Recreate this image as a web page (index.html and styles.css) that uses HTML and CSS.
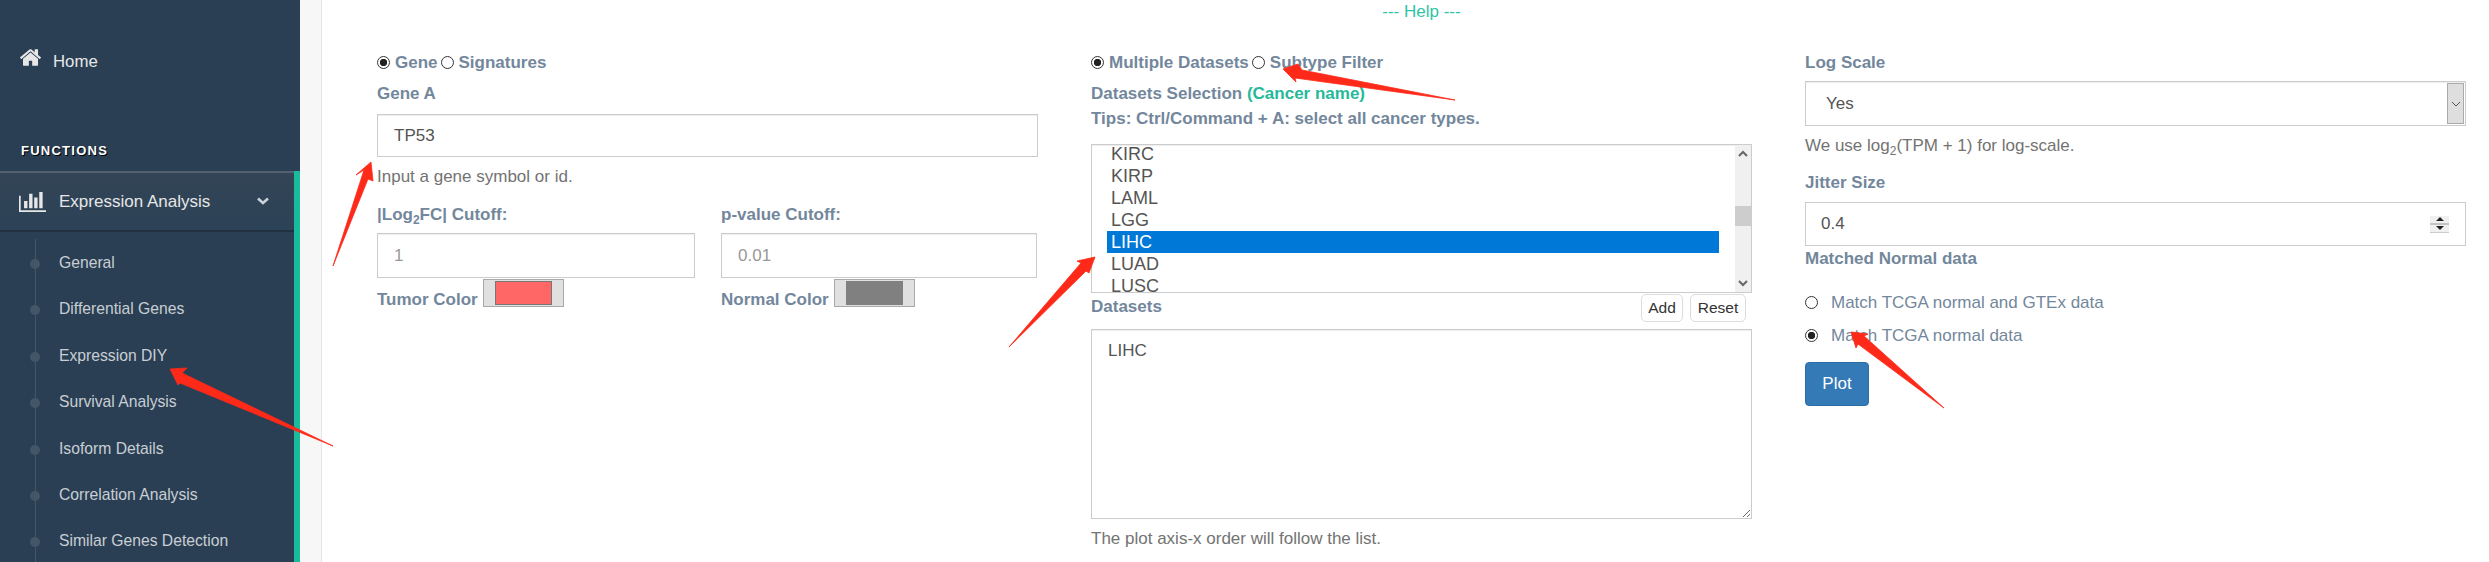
FILE: index.html
```html
<!DOCTYPE html>
<html lang="en">
<head>
    <meta charset="UTF-8">
    <meta name="viewport" content="width=device-width, initial-scale=1.0">
    <title>Expression DIY</title>
    <link rel="stylesheet" href="styles.css">
</head>
<body>
    <div class="sidebar">
        <a class="home-link" href="#">
            <svg class="home-icon" viewBox="90 250 1610 1290"><path fill="#e7e7e7" d="M1472 992v480q0 26-19 45t-45 19h-384v-384h-256v384h-384q-26 0-45-19t-19-45v-480q0-1 .5-3t.5-3l575-474 575 474q1 2 1 6zm223-69l-62 74q-8 9-21 11h-3q-13 0-21-7l-692-577-692 577q-12 8-24 7-13-2-21-11l-62-74q-8-10-7-22.500t11-21.500l719-599q32-26 76-26t76 26l244 204v-195q0-14 9-23t23-9h192q14 0 23 9t9 23v408l219 182q10 8 11 21.500t-7 21.500z"/></svg>
            Home
        </a>
        <h3 class="menu-title">FUNCTIONS</h3>
        <div class="menu-group">
            <a class="menu-head" href="#">
                <svg class="chart-icon" viewBox="0 256 2048 1408" preserveAspectRatio="none"><path fill="#e7e7e7" d="M640 896v512h-256v-512h256zm384-512v1024h-256v-1024h256zm1024 1152v128h-2048v-1152h128v1024h1920zm-640-896v768h-256v-768h256zm384-384v1152h-256v-1152h256z"/></svg>
                <span class="menu-head-text">Expression Analysis</span>
                <svg class="chevron" viewBox="0 0 12 8"><path d="M1 1.500l5 4.500 5-4.500" fill="none" stroke="#c9d2da" stroke-width="2.600"/></svg>
            </a>
            <ul class="submenu">
                <li>General</li>
                <li>Differential Genes</li>
                <li>Expression DIY</li>
                <li>Survival Analysis</li>
                <li>Isoform Details</li>
                <li>Correlation Analysis</li>
                <li>Similar Genes Detection</li>
            </ul>
        </div>
    </div>

    <div class="main">
        <div class="help-link">--- Help ---</div>
        <div class="columns">
            <div class="col">
                <div class="radio-row">
                    <span class="radio checked"></span><span class="radio-text">Gene</span>
                    <span class="radio next"></span><span class="radio-text">Signatures</span>
                </div>
                <label class="label gene-label">Gene A</label>
                <input class="text-input gene-input" type="text" value="TP53">
                <p class="help gene-help">Input a gene symbol or id.</p>
                <div class="cutoffs">
                    <div>
                        <label class="label">|Log<sub>2</sub>FC| Cutoff:</label>
                        <input class="text-input cutoff-input" type="text" placeholder="1">
                        <div class="color-row">
                            <span class="label color-label">Tumor Color</span>
                            <span class="color-btn"><span class="swatch swatch-red"></span></span>
                        </div>
                    </div>
                    <div>
                        <label class="label">p-value Cutoff:</label>
                        <input class="text-input cutoff-input" type="text" placeholder="0.01">
                        <div class="color-row">
                            <span class="label color-label">Normal Color</span>
                            <span class="color-btn"><span class="swatch swatch-gray"></span></span>
                        </div>
                    </div>
                </div>
            </div>

            <div class="col">
                <div class="radio-row">
                    <span class="radio checked"></span><span class="radio-text">Multiple Datasets</span>
                    <span class="radio next"></span><span class="radio-text">Subtype Filter</span>
                </div>
                <label class="label gene-label">Datasets Selection <span class="green">(Cancer name)</span></label>
                <div class="label tips">Tips: Ctrl/Command + A: select all cancer types.</div>
                <div class="listbox">
                    <ul class="options">
                        <li>KIRC</li>
                        <li>KIRP</li>
                        <li>LAML</li>
                        <li>LGG</li>
                        <li class="selected">LIHC</li>
                        <li>LUAD</li>
                        <li>LUSC</li>
                    </ul>
                    <div class="scrollbar">
                        <svg class="scroll-arrow" viewBox="0 0 16 17"><path d="M4 11l4-4 4 4" fill="none" stroke="#666" stroke-width="2"/></svg>
                        <div class="thumb"></div>
                        <svg class="scroll-arrow arrow-down" viewBox="0 0 16 17"><path d="M4 6l4 4 4-4" fill="none" stroke="#666" stroke-width="2"/></svg>
                    </div>
                </div>
                <div class="datasets-row">
                    <label class="label datasets-label">Datasets</label>
                    <button class="small-btn">Add</button>
                    <button class="small-btn">Reset</button>
                </div>
                <textarea class="text-input datasets-area">LIHC</textarea>
                <p class="help gene-help">The plot axis-x order will follow the list.</p>
            </div>

            <div class="col">
                <label class="label">Log Scale</label>
                <div class="select-box">
                    <span class="select-value">Yes</span>
                    <span class="select-arrow"><svg viewBox="0 0 10 6" width="10" height="6"><path d="M1 1l4 4 4-4" fill="none" stroke="#555" stroke-width="1"/></svg></span>
                </div>
                <p class="help gene-help">We use log<sub>2</sub>(TPM + 1) for log-scale.</p>
                <label class="label jitter-label">Jitter Size</label>
                <div class="number-box">
                    <span>0.4</span>
                    <span class="spinner"><span class="spin-up"></span><span class="spin-down"></span></span>
                </div>
                <label class="label matched-label">Matched Normal data</label>
                <div class="match-row first-match"><span class="radio"></span><span class="radio-text">Match TCGA normal and GTEx data</span></div>
                <div class="match-row second-match"><span class="radio checked"></span><span class="radio-text">Match TCGA normal data</span></div>
                <button class="plot-btn">Plot</button>
            </div>
        </div>
    </div>

    <!-- red annotation arrows on top of the page -->
    <svg class="arrows" width="2489" height="562" viewBox="0 0 2489 562">
        <polygon points="333,446 182,373 187,368 170,369 178,385 180,383"/>
        <polygon points="333,266 364,170 356,175 371,162 373,181 368,179"/>
        <polygon points="1009,347 1081,263 1077,261 1095,257 1089,273 1086,271"/>
        <polygon points="1455,100 1302,70 1298,64 1283,69 1296,82 1295,78"/>
        <polygon points="1944,408 1864,336 1868,334 1851,332 1856,348 1858,344"/>
    </svg>
</body>
</html>
```

FILE: styles.css
```css
* {
    box-sizing: border-box;
}
html, body {
    height: 562px;
    overflow: hidden;
}
body {
    margin: 0;
    display: flex;
    position: relative;
    background: #f7f7f7;
    font-family: "Liberation Sans", Arial, sans-serif;
    font-size: 17px;
    line-height: 20px;
    color: #73879c;
}
sub {
    font-size: 12px;
    line-height: 0;
}

/* sidebar */
.sidebar {
    width: 300px;
    flex: none;
    background: #2a3f54;
    overflow: hidden;
}
.home-link {
    display: flex;
    align-items: center;
    height: 40px;
    margin-top: 41px;
    padding: 2px 0 0 20px;
    color: #e7e7e7;
    font-size: 16.8px;
    text-decoration: none;
}
.home-icon {
    width: 21px;
    height: 17px;
    margin-right: 12px;
    margin-top: -9px;
}
.menu-title {
    margin: 60px 0 0 21px;
    height: 30px;
    color: #fff;
    font-size: 13px;
    line-height: 20px;
    font-weight: bold;
    letter-spacing: 1.25px;
    text-shadow: 1px 1px #000;
}
.menu-group {
    border-right: 6px solid #1abb9c;
    height: 391px;
}
.menu-head {
    display: flex;
    align-items: center;
    height: 61px;
    padding-left: 19px;
    color: #e7e7e7;
    text-decoration: none;
    background: linear-gradient(#334556, #2c4257);
    box-shadow: inset 0 2px 0 rgba(255, 255, 255, 0.16), inset 0 -2px 0 rgba(0, 0, 0, 0.25);
}
.chart-icon {
    width: 27px;
    height: 20px;
    margin-right: 13px;
}
.menu-head-text {
    flex: 1;
    font-size: 17px;
}
.chevron {
    width: 12px;
    height: 8px;
    margin-right: 25px;
    margin-top: -2px;
}
.submenu {
    list-style: none;
    margin: 0;
    padding: 8px 0 0 59px;
    position: relative;
    color: rgba(255, 255, 255, 0.75);
    font-size: 15.7px;
}
.submenu::before {
    content: '';
    position: absolute;
    left: 35px;
    top: 7px;
    bottom: -40px;
    width: 1px;
    background: #425668;
}
.submenu li {
    height: 46.4px;
    line-height: 46.4px;
    position: relative;
}
.submenu li::before {
    content: '';
    position: absolute;
    left: -29px;
    top: 19px;
    width: 10px;
    height: 10px;
    border-radius: 50%;
    background: #425668;
}

/* main area */
.main {
    flex: 1;
    margin-left: 21px;
    background: #fff;
    border-left: 1px solid #e6e6e6;
}
.help-link {
    height: 52px;
    padding: 2px 0 0 32px;
    text-align: center;
    color: #2ec4a6;
}
.columns {
    display: grid;
    grid-template-columns: 714px 714px 661px;
    padding-left: 55px;
}
.col {
    min-width: 0;
}
.col:nth-child(-n+2) > * {
    max-width: 661px;
}
.label {
    display: block;
    font-weight: bold;
    color: #73879c;
    line-height: 22px;
    margin-bottom: -2px;
}
.radio-row {
    display: flex;
    align-items: center;
    height: 20px;
    font-weight: bold;
}
.radio-text {
    padding-top: 2px;
}
.radio {
    width: 13px;
    height: 13px;
    flex: none;
    margin-right: 5px;
    border: 1.3px solid #333;
    border-radius: 50%;
    background: #fff;
}
.radio.next {
    margin-left: 3px;
}
.radio.checked {
    background: radial-gradient(circle, #222 0, #222 3.4px, #fff 4px);
}
.gene-label {
    margin-top: 11px;
}
.text-input {
    display: block;
    width: 100%;
    padding: 0 16px;
    border: 1px solid #ccc;
    border-radius: 0;
    background: #fff;
    font-family: inherit;
    font-size: 17px;
    color: #555;
    box-shadow: inset 0 1px 1px rgba(0, 0, 0, 0.075);
    outline: none;
}
.text-input::placeholder {
    color: #999;
    opacity: 1;
}
.gene-input {
    height: 43px;
    margin-top: 11px;
}
.help {
    margin: 0 0 -2px;
    line-height: 22px;
    color: #737373;
}
.gene-help {
    margin-top: 9px;
}
.cutoffs {
    display: grid;
    grid-template-columns: 318px 316px;
    column-gap: 26px;
    margin-top: 18px;
}
.cutoff-input {
    height: 45px;
    margin-top: 9px;
}
.color-row {
    display: flex;
    margin-top: 1px;
}
.color-label {
    margin-top: 10px;
    margin-right: 5px;
    white-space: nowrap;
}
.color-btn {
    width: 81px;
    height: 28px;
    padding: 1px 11px;
    border: 1px solid #a9a9a9;
    background: #e0e0e0;
}
.swatch {
    display: block;
    height: 24px;
}
.swatch-red {
    background: #ff6666;
    border: 1px solid #777;
}
.swatch-gray {
    background: #808080;
}
.green {
    color: #26b99a;
}
.tips {
    margin-top: 5px;
}
.listbox {
    display: flex;
    height: 149px;
    margin-top: 16px;
    border: 1px solid #ccc;
    overflow: hidden;
    background: #fff;
    box-shadow: inset 0 1px 1px rgba(0, 0, 0, 0.075);
}
.options {
    flex: 1;
    list-style: none;
    margin: -2px 0 0;
    padding: 0 16px 0 15px;
    color: #555;
    font-size: 18px;
}
.options li {
    height: 22px;
    line-height: 23px;
    padding-left: 4px;
}
.options .selected {
    background: #0078d7;
    color: #fff;
}
.scrollbar {
    width: 16px;
    flex: none;
    display: flex;
    flex-direction: column;
    background: #f0f0f0;
}
.scroll-arrow {
    display: block;
    width: 16px;
    height: 17px;
    flex: none;
}
.arrow-down {
    margin-top: auto;
}
.thumb {
    height: 20px;
    margin-top: 44px;
    background: #cdcdcd;
}
.datasets-row {
    display: flex;
    height: 28px;
    margin-top: 1px;
    padding-right: 6px;
}
.datasets-label {
    margin: 2px auto 0 0;
}
.small-btn {
    height: 28px;
    margin-left: 7px;
    padding: 0 3px;
    border: 1px solid #ddd;
    border-radius: 5px;
    background: #fff;
    font-family: inherit;
    font-size: 15.5px;
    color: #333;
}
.small-btn:first-of-type {
    width: 42px;
}
.small-btn:last-of-type {
    width: 56px;
}
.datasets-area {
    height: 190px;
    margin-top: 7px;
    padding-top: 11px;
    line-height: 20px;
    resize: both;
}
.select-box {
    display: flex;
    height: 45px;
    margin-top: 9px;
    padding: 1px;
    border: 1px solid #ccc;
    color: #555;
    box-shadow: inset 0 1px 1px rgba(0, 0, 0, 0.075);
}
.select-value {
    flex: 1;
    padding-left: 19px;
    line-height: 41px;
}
.select-arrow {
    width: 17px;
    display: flex;
    align-items: center;
    justify-content: center;
    border: 1px solid #aaa;
    background: #dedede;
}
.jitter-label {
    margin-top: 17px;
}
.number-box {
    display: flex;
    align-items: center;
    justify-content: space-between;
    height: 44px;
    margin-top: 10px;
    padding: 0 16px 0 15px;
    border: 1px solid #ccc;
    color: #555;
}
.spinner {
    width: 19px;
    height: 17px;
    display: flex;
    flex-direction: column;
    background: #f0f0f0;
    border-bottom: 1px solid #ccc;
}
.spin-up, .spin-down {
    flex: 1;
    display: flex;
    align-items: center;
    justify-content: center;
}
.spin-up {
    border-bottom: 2px solid #c4c4c4;
}
.spin-up::after {
    content: '';
    border: 4px solid transparent;
    border-top: 0;
    border-bottom: 4px solid #222;
}
.spin-down::after {
    content: '';
    border: 4px solid transparent;
    border-bottom: 0;
    border-top: 4px solid #222;
}
.matched-label {
    margin-top: 2px;
}
.match-row {
    display: flex;
    align-items: center;
    height: 20px;
}
.match-row .radio {
    margin-right: 13px;
}
.first-match {
    margin-top: 24px;
}
.second-match {
    margin-top: 13px;
}
.plot-btn {
    display: block;
    width: 64px;
    height: 44px;
    margin-top: 17px;
    border: 1px solid #2e6da4;
    border-radius: 4px;
    background: #337ab7;
    color: #fff;
    font-family: inherit;
    font-size: 17px;
}

/* annotations */
.arrows {
    position: absolute;
    left: 0;
    top: 0;
    pointer-events: none;
}
.arrows polygon {
    fill: #fe2a19;
    stroke: #fe2a19;
    stroke-width: 0.8;
}
```
